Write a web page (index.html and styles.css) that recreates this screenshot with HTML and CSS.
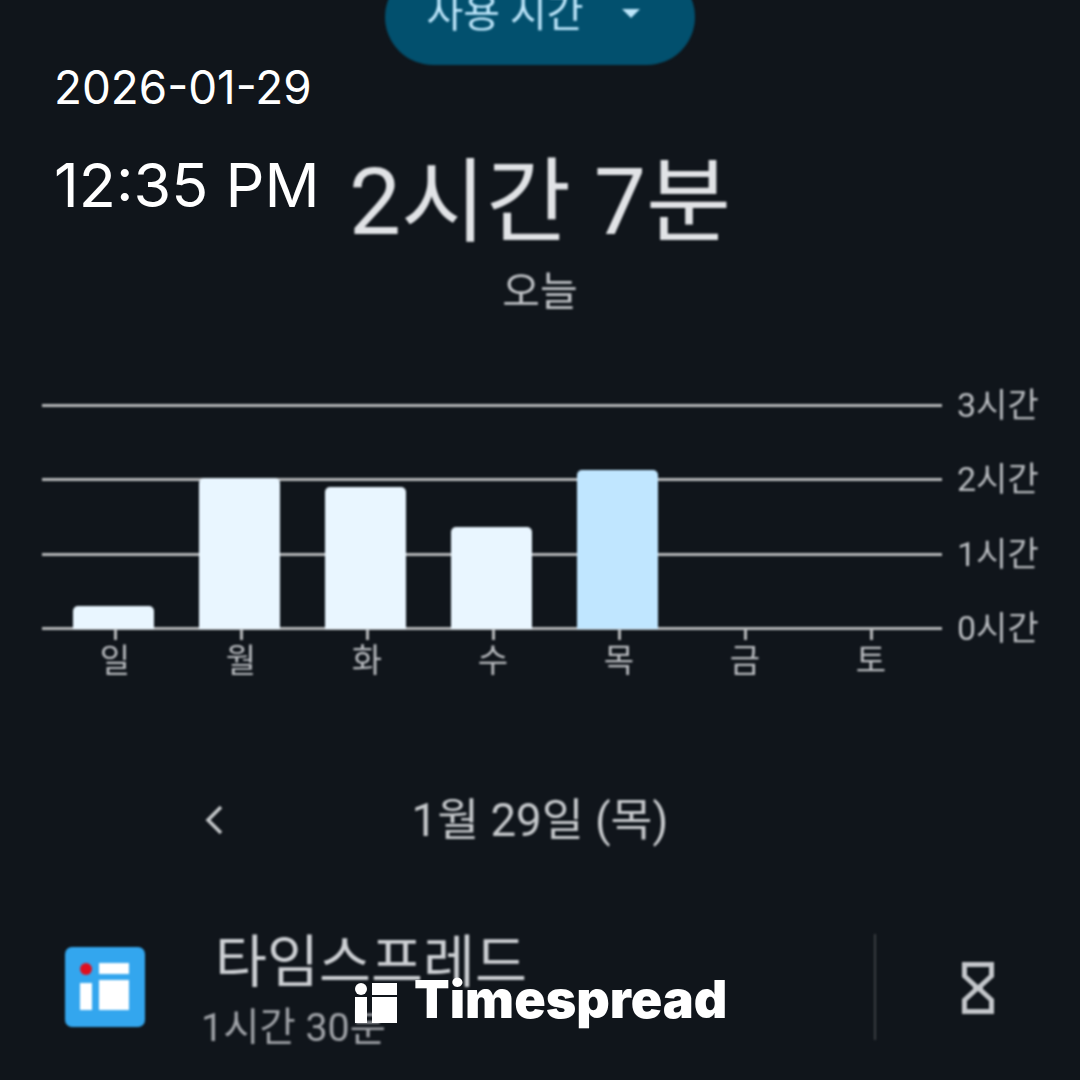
FILE: index.html
```html
<!DOCTYPE html>
<html lang="ko">
<head>
<meta charset="utf-8">
<title>사용 시간</title>
<link rel="stylesheet" href="styles.css">
</head>
<body>
<main class="screen">
  <div class="picker"><span>사용 시간</span><i class="caret"></i></div>
  <h1 class="total">2시간 7분</h1>
  <p class="today">오늘</p>
  <section class="chart">
    <div class="plot">
      <div class="grid">
        <div class="line"><span>3시간</span></div>
        <div class="line"><span>2시간</span></div>
        <div class="line"><span>1시간</span></div>
        <div class="line"><span>0시간</span></div>
      </div>
      <div class="bars">
        <div class="slot"><div class="bar" style="height:23px"></div></div>
        <div class="slot"><div class="bar" style="height:151px"></div></div>
        <div class="slot"><div class="bar" style="height:142px"></div></div>
        <div class="slot"><div class="bar" style="height:102px"></div></div>
        <div class="slot"><div class="bar now" style="height:159px"></div></div>
        <div class="slot"></div>
        <div class="slot"></div>
      </div>
    </div>
    <div class="days">
      <span>일</span><span>월</span><span>화</span><span>수</span><span>목</span><span>금</span><span>토</span>
    </div>
  </section>
  <div class="datebar">
    <svg class="chev" width="20" height="32" viewBox="0 0 20 32"><path d="M17 3 L4 16 L17 29" fill="none" stroke="#c6c9cc" stroke-width="3.500"/></svg>
    <span>1월 29일 (목)</span>
  </div>
  <div class="app">
    <svg class="appicon" width="80" height="80" viewBox="0 0 80 80">
      <rect width="80" height="80" rx="7" fill="#33a6ee"/>
      <rect x="15" y="36" width="12" height="27" fill="#fff"/>
      <rect x="34" y="16" width="30" height="11" fill="#fff"/>
      <rect x="34" y="33" width="30" height="30" fill="#fff"/>
      <ellipse cx="21" cy="22" rx="6" ry="6" fill="#e01020"/>
    </svg>
    <div class="appinfo">
      <div class="appname">타임스프레드</div>
      <div class="apptime">1시간 30분</div>
    </div>
    <div class="divider"></div>
    <svg class="glass" width="36" height="56" viewBox="0 0 36 56"><path d="M2 2 H34 V17 L23 27 V29 L34 39 V54 H2 V39 L13 29 V27 L2 17 Z M7 7 V15 L18 25 L29 15 V7 Z M7 49 H29 V41 L18 31 L7 41 Z" fill="#c4c7cb" fill-rule="evenodd"/></svg>
  </div>
</main>
<div class="clock">
  <div class="date">2026-01-29</div>
  <div class="time">12:35 PM</div>
</div>
<div class="brand">
  <svg class="brandmark" width="42" height="40" viewBox="0 0 42 40">
    <circle cx="6" cy="6" r="6" fill="#fff"/>
    <rect x="0" y="14" width="12" height="26" fill="#fff"/>
    <rect x="17" y="0" width="25" height="12" fill="#fff"/>
    <rect x="17" y="14" width="25" height="26" fill="#fff"/>
  </svg>
  <span>Timespread</span>
</div>
</body>
</html>
```
FILE: styles.css
```css
* { box-sizing: border-box; }
html, body { margin: 0; height: 100%; }
body {
  width: 1080px;
  height: 1080px;
  overflow: hidden;
  position: relative;
  background: #10151b;
  font-family: Roboto, "Noto Sans CJK KR", sans-serif;
}
.screen {
  display: flex;
  flex-direction: column;
  align-items: center;
  height: 1080px;
  filter: blur(0.8px);
}
.picker {
  width: 310px;
  height: 96px;
  margin-top: -31px;
  flex: none;
  border-radius: 48px;
  background: #02506e;
  color: #bde6fb;
  font-size: 40px;
  display: flex;
  align-items: center;
  justify-content: center;
  gap: 38px;
  padding: 0 14px 14px 0;
}
.caret {
  width: 0;
  height: 0;
  margin-top: 6px;
  border-left: 9px solid transparent;
  border-right: 9px solid transparent;
  border-top: 9px solid #bde6fb;
}
.total {
  margin: 86px 0 0;
  height: 104px;
  font-size: 92.500px;
  line-height: 104px;
  font-weight: 400;
  color: #e1e3e6;
}
.today {
  margin: 12px 0 0;
  height: 50px;
  font-size: 41px;
  line-height: 50px;
  color: #bfc2c6;
}
.chart { width: 1080px; margin-top: 87px; padding-left: 42px; }
.plot { position: relative; width: 900px; height: 226px; }
.grid {
  position: absolute;
  inset: 0;
  display: flex;
  flex-direction: column;
  justify-content: space-between;
}
.line { height: 3px; background: #b5b7b9; position: relative; }
.line span {
  position: absolute;
  left: 915px;
  top: -23px;
  font-size: 34px;
  line-height: 48px;
  color: #b9bcc0;
  white-space: nowrap;
}
.bars {
  position: absolute;
  inset: 0 0 1px 0;
  display: grid;
  grid-template-columns: repeat(7, 126px);
  padding-left: 8px;
  align-items: end;
}
.slot { height: 100%; display: flex; align-items: flex-end; justify-content: center; }
.bar { width: 81px; background: #e9f6ff; border-radius: 5px 5px 0 0; }
.bar.now { background: #c0e6ff; }
.days {
  display: grid;
  grid-template-columns: repeat(7, 126px);
  padding-left: 10px;
  height: 48px;
}
.days span {
  text-align: center;
  font-size: 33px;
  line-height: 48px;
  margin-top: 7px;
  color: #b9bcc0;
  position: relative;
}
.days span::before {
  content: "";
  position: absolute;
  left: 50%;
  margin-left: -1.500px;
  top: -7px;
  width: 3px;
  height: 10px;
  background: #b5b7b9;
}
.datebar {
  position: relative;
  margin-top: 113px;
  height: 60px;
  font-size: 45.600px;
  line-height: 60px;
  color: #c6c9cc;
}
.chev { position: absolute; left: -208px; top: 13px; }
.app {
  width: 1080px;
  margin-top: 82px;
  height: 108px;
  display: flex;
  align-items: center;
  padding-left: 65px;
  position: relative;
}
.appicon { flex: none; }
.appinfo { margin-left: 56px; width: 701px; position: relative; }
.appname {
  font-size: 56.500px;
  line-height: 60px;
  margin-left: 14px;
  margin-top: 11px;
  color: #cdd0d4;
  font-weight: 400;
}
.apptime {
  font-size: 39.400px;
  line-height: 50px;
  margin-top: 10px;
  color: #a0a3a8;
}
.divider { width: 2px; height: 106px; background: #3a3e42; margin-left: -28px; flex: none; }
.glass { flex: none; margin-left: 84px; margin-top: 2px; }
.clock {
  position: absolute;
  left: 54px;
  top: 58px;
  color: #fff;
  font-family: Inter, sans-serif;
}
.date { font-size: 45.800px; line-height: 60px; }
.time { font-size: 61px; line-height: 68px; margin-top: 33px; }
.brand {
  position: absolute;
  left: 355px;
  top: 970px;
  display: flex;
  align-items: center;
  gap: 17px;
  color: #fff;
  font-family: Inter, sans-serif;
  font-weight: 900;
  font-size: 52px;
  line-height: 60px;
}
.brandmark { flex: none; margin-top: 6px; }
```
